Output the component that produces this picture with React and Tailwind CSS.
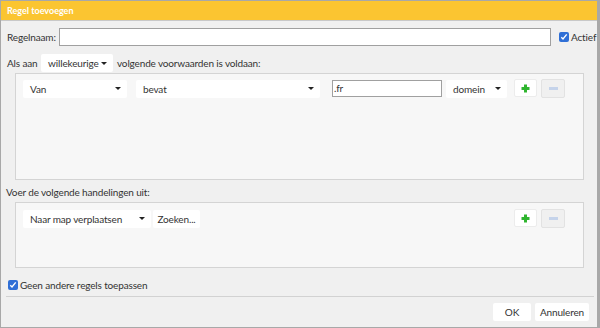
const font = { fontFamily: 'Lato, "Open Sans", sans-serif' }

function Select({ label, className }) {
  return (
    <div className={`flex items-center justify-between bg-white rounded-[2px] pl-[7px] pr-[6px] h-[18px] ${className}`}>
      <span>{label}</span>
      <span className="w-0 h-0 border-l-[3px] border-r-[3px] border-t-[3px] border-l-transparent border-r-transparent border-t-[#222]" />
    </div>
  )
}

function Check() {
  return (
    <div className="w-[10px] h-[10px] bg-[#2f6fd6] rounded-[2px] flex items-center justify-center">
      <svg width="8" height="8" viewBox="0 0 8 8">
        <path d="M1.3 4.3l1.7 1.7 3.7-4.6" stroke="white" strokeWidth="1.4" fill="none" />
      </svg>
    </div>
  )
}

function AddButtons() {
  return (
    <div className="flex gap-[4px]">
      <div className="w-[23px] h-[18px] bg-white rounded-[2px] border border-[#ececec] flex items-center justify-center">
        <svg width="9" height="9" viewBox="0 0 9 9">
          <path d="M3 0.5h3v2.5h2.5v3h-2.5v2.5h-3v-2.5h-2.5v-3h2.5z" fill="#2fb52f" />
        </svg>
      </div>
      <div className="w-[24px] h-[19px] bg-[#f0f0f0] rounded-[2px] border border-[#e2e2e2] flex items-center justify-center">
        <div className="w-[9px] h-[3px] bg-[#c5d3ea]" />
      </div>
    </div>
  )
}

export default function App() {
  return (
    <div
      className="w-[600px] h-[328px] bg-[#f0f0f0] text-[10px] leading-[14px] tracking-[-0.15px] text-[#333] overflow-hidden"
      style={font}
    >
      <div className="h-full flex flex-col border-t border-l border-b border-r-[3px] border-[#a8a8a8]">
        {/* Title */}
        <div className="h-[20px] bg-[#fbc531] border-b border-[#c8c8c8] flex items-center px-[6px]">
          <span className="text-white font-bold text-[9px] tracking-normal">Regel toevoegen</span>
        </div>

        {/* Name */}
        <div className="flex items-center mt-[7px] pl-[6px]">
          <span className="w-[52px]">Regelnaam:</span>
          <div className="w-[492px] h-[18px] bg-white border border-[#a0a0a0]" />
          <div className="ml-[8px]"><Check /></div>
          <span className="ml-[2px]">Actief</span>
        </div>

        {/* Conditions header */}
        <div className="flex items-center mt-[8px] pl-[6px]">
          <span className="w-[34px]">Als aan</span>
          <Select label="willekeurige" className="w-[72px]" />
          <span className="ml-[4px]">volgende voorwaarden is voldaan:</span>
        </div>

        <div className="ml-[14px] mr-[13px] mt-[1px] h-[107px] bg-[#f7f7f7] border border-[#d4d4d4] px-[7px] pt-[5px]">
          <div className="flex items-center">
            <Select label="Van" className="w-[104px]" />
            <Select label="bevat" className="ml-[9px] w-[184px]" />
            <div className="ml-[12px] w-[110px] h-[17px] bg-white border border-[#a0a0a0] pl-[1px] leading-[15px]">.fr</div>
            <Select label="domein" className="ml-[4px] w-[61px]" />
            <div className="ml-[7px]"><AddButtons /></div>
          </div>
        </div>

        {/* Actions */}
        <div className="mt-[5px] pl-[5px]">Voer de volgende handelingen uit:</div>
        <div className="ml-[14px] mr-[13px] mt-[3px] h-[66px] bg-[#f7f7f7] border border-[#d4d4d4] px-[7px] pt-[6px]">
          <div className="flex items-center">
            <Select label="Naar map verplaatsen" className="w-[128px]" />
            <div className="ml-[2px] h-[18px] w-[47px] bg-white rounded-[2px] flex items-center justify-center">Zoeken...</div>
            <div className="ml-auto mr-[11px]"><AddButtons /></div>
          </div>
        </div>

        {/* Footer checkbox */}
        <div className="flex items-center mt-[10px] pl-[7px]">
          <Check />
          <span className="ml-[2px]">Geen andere regels toepassen</span>
        </div>

        <div className="mt-[4px] ml-[5px] mr-[3px] border-t border-[#d2d2d2]" />

        <div className="flex justify-end gap-[4px] mt-[6px] pr-[8px]">
          <div className="w-[38px] h-[18px] bg-white rounded-[2px] flex items-center justify-center">OK</div>
          <div className="w-[54px] h-[18px] bg-white rounded-[2px] flex items-center justify-center">Annuleren</div>
        </div>
      </div>
    </div>
  )
}
